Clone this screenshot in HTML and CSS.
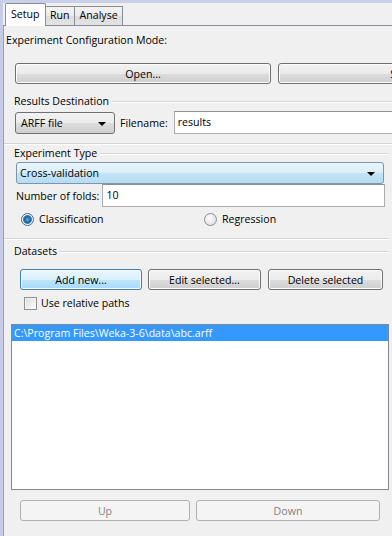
FILE: index.html
```html
<!DOCTYPE html>
<html lang="en">
  <head>
    <meta charset="UTF-8" />
    <meta name="viewport" content="width=device-width, initial-scale=1.0" />
    <title>Weka Experiment Environment</title>
    <link rel="stylesheet" href="styles.css">
  </head>
  <body>
    <div class="window">
      <div class="tabs">
        <div class="tab active">Setup</div>
        <div class="tab">Run</div>
        <div class="tab">Analyse</div>
      </div>

      <div class="panel">
        <div class="mode-label">Experiment Configuration Mode:</div>

        <div class="file-buttons">
          <button class="btn wide">Open...</button>
          <button class="btn wide">Save...</button>
        </div>

        <!-- Results Destination -->
        <div class="group results">
          <div class="group-title"><span>Results Destination</span><i></i></div>
          <div class="row">
            <div class="combo arff">ARFF file<b class="arrow"></b></div>
            <label class="field-label">Filename:</label>
            <div class="textfield filename">results</div>
          </div>
        </div>

        <div class="columns">
          <div class="left-col">
            <!-- Experiment Type -->
            <div class="group exp-type">
              <div class="group-title"><span>Experiment Type</span><i></i></div>
              <div class="combo cv">Cross-validation<b class="arrow"></b></div>
              <div class="row folds">
                <label class="field-label">Number of folds:</label>
                <div class="textfield">10</div>
              </div>
              <div class="row radios">
                <div class="radio-item"><span class="radio checked"></span>Classification</div>
                <div class="radio-item"><span class="radio"></span>Regression</div>
              </div>
            </div>

            <!-- Datasets -->
            <div class="group datasets">
              <div class="group-title"><span>Datasets</span><i></i></div>
              <div class="row data-buttons">
                <button class="btn default add">Add new...</button>
                <button class="btn edit">Edit selected...</button>
                <button class="btn del">Delete selected</button>
              </div>
              <div class="check-item"><span class="checkbox"></span>Use relative paths</div>
              <ul class="data-list">
                <li class="selected">C:\Program Files\Weka-3-6\data\abc.arff</li>
              </ul>
              <div class="row move-buttons">
                <button class="btn disabled up">Up</button>
                <button class="btn disabled down">Down</button>
              </div>
            </div>
          </div>
        </div>
      </div>
    </div>
  </body>
</html>
```

FILE: styles.css
```css
body {
  margin: 0;
  padding: 0;
  width: 392px;
  height: 536px;
  overflow: hidden;
  background-color: #f0f0f0;
  font-family: "Open Sans", "Noto Sans", sans-serif;
  font-size: 10.6px;
  color: #000;
}

.window {
  width: 540px;
  height: 536px;
  border-top: 3px solid #c9d1ea;
  border-left: 3px solid #c6cce6;
  box-sizing: border-box;
  background-color: #f0f0f0;
}

/* tabs */
.tabs {
  display: flex;
  align-items: flex-end;
  height: 22px;
  padding-left: 2px;
}

.tab {
  position: relative;
  height: 18px;
  line-height: 17px;
  padding: 0 4.5px;
  border: 1px solid #898c95;
  border-bottom: none;
  background: linear-gradient(#f3f3f3, #ebebeb 50%, #dddddd 51%, #e3e3e3);
  margin-left: -1px;
}

.tab.active {
  height: 22px;
  line-height: 20px;
  margin-bottom: -1px;
  margin-left: 0;
  padding: 0 5px;
  background: #fdfdfd;
  z-index: 1;
  border-radius: 2px 2px 0 0;
}

.tab.active + .tab {
  margin-left: 0;
  border-left: none;
}

.panel {
  height: 600px;
  border-top: 1px solid #898c95;
  border-left: 1px solid #a0a0a0;
  background-color: #f0f0f0;
}

.mode-label {
  padding: 7px 0 0 2px;
  line-height: 14px;
}

/* buttons */
.btn {
  font-family: inherit;
  font-size: 10.6px;
  color: #000;
  height: 21px;
  padding: 0;
  border: 1px solid #707070;
  border-radius: 3px;
  background: linear-gradient(#f2f2f2, #ebebeb 50%, #dddddd 51%, #cfcfcf);
  box-shadow: inset 0 0 0 1px #fcfcfc;
}

.btn.default {
  border-color: #3c7fb1;
  background: linear-gradient(#eaf6fd, #d9f0fc 50%, #bee6fd 51%, #a7d9f5);
}

.btn.disabled {
  color: #838383;
  border-color: #adb2b5;
  background: #f4f4f4;
  box-shadow: none;
}

.file-buttons {
  display: flex;
  gap: 7px;
  margin: 16px 0 0 11px;
}

.btn.wide {
  width: 256px;
}

/* groups */
.group-title {
  display: flex;
  align-items: center;
  line-height: 14px;
}

.group-title span {
  padding: 0 3px 0 10px;
}

.group-title i {
  flex: 1;
  height: 1px;
  background-color: #d5d5d5;
  box-shadow: 0 1px 0 #fff;
}

.group {
  border-bottom: 1px solid #d5d5d5;
  box-shadow: 0 1px 0 #fff;
}

.row {
  display: flex;
  align-items: center;
}

.results {
  margin-top: 10px;
  padding-bottom: 9px;
}

.results .row {
  margin: 3px 0 0 11px;
}

.combo {
  position: relative;
  box-sizing: border-box;
  height: 22px;
  line-height: 20px;
  padding-left: 5px;
  border: 1px solid #707070;
  border-radius: 3px;
  background: linear-gradient(#f2f2f2, #ebebeb 50%, #dddddd 51%, #cfcfcf);
}

.arrow {
  position: absolute;
  right: 8px;
  top: 9px;
  width: 0;
  height: 0;
  border-left: 4px solid transparent;
  border-right: 4px solid transparent;
  border-top: 4px solid #000;
}

.combo.arff {
  width: 100px;
}

.field-label {
  padding: 0 6px 0 5px;
}

.textfield {
  box-sizing: border-box;
  height: 23px;
  line-height: 21px;
  padding-left: 3px;
  border: 1px solid #abadb3;
  border-top-color: #8e8f8f;
  background-color: #fff;
}

.textfield.filename {
  width: 362px;
}

.columns {
  display: flex;
}

.left-col {
  width: 385px;
}

.exp-type {
  margin-top: 2px;
  padding-bottom: 12px;
}

.combo.cv {
  width: 368px;
  margin: 2px 0 0 12px;
  padding-left: 3px;
  border-color: #7996b5;
  background: linear-gradient(#eaf5fc, #d9eef9 50%, #c4e4f5 51%, #b7dcf0);
}

.folds {
  margin-left: 12px;
}

.folds .field-label {
  padding: 0 3px 0 0;
}

.folds .textfield {
  width: 283px;
}

.radios {
  margin: 5px 0 0 17px;
  height: 14px;
}

.radio-item {
  display: flex;
  align-items: center;
  width: 183px;
}

.radio {
  box-sizing: border-box;
  width: 13px;
  height: 13px;
  margin-right: 5px;
  border: 1px solid #8f8f8f;
  border-radius: 50%;
  background: radial-gradient(circle at 40% 40%, #fff, #d6d6d6);
}

.radio.checked {
  background: radial-gradient(circle, #69b4e6 0, #1b5f94 3px, #3a86c0 4px, #eaf3f9 5px, #d0d0d0 7px);
  border-color: #4b6d8d;
}

.datasets {
  margin-top: 5px;
  padding-bottom: 20px;
}

.data-buttons {
  gap: 6px;
  margin: 11px 0 0 16px;
}

.btn.add {
  width: 122px;
}

.btn.edit {
  width: 113px;
}

.btn.del {
  width: 115px;
  margin-left: 1px;
}

.check-item {
  display: flex;
  align-items: center;
  margin: 6px 0 0 20px;
  height: 14px;
}

.checkbox {
  box-sizing: border-box;
  width: 13px;
  height: 13px;
  margin-right: 4px;
  border: 1px solid #8f8f8f;
  background: linear-gradient(135deg, #dcdcdc, #fefefe);
  box-shadow: inset 0 0 0 1px #f4f4f4;
}

.data-list {
  list-style: none;
  margin: 14px 0 0 7px;
  padding: 0;
  width: 378px;
  height: 166px;
  box-sizing: border-box;
  border: 1px solid #828790;
  background-color: #fff;
}

.data-list li {
  height: 16px;
  line-height: 16px;
  padding-left: 2px;
}

.data-list li.selected {
  background-color: #3399ff;
  color: #fff;
}

.move-buttons {
  gap: 6px;
  margin: 10px 0 0 16px;
}

.btn.up {
  width: 170px;
}

.btn.down {
  width: 184px;
}
```
